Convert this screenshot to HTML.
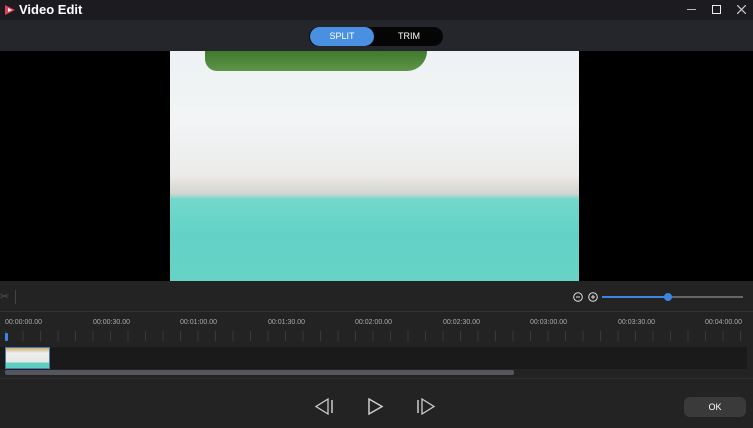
<!DOCTYPE html>
<html><head><style>
body{margin:0;width:753px;height:428px;overflow:hidden;background:#232323;font-family:"Liberation Sans",sans-serif;position:relative}
div{position:absolute;box-sizing:border-box}
.t{font-size:7px;color:#aaa;top:319px}
</style></head><body>
<div style="left:0;top:0;width:753px;height:20px;background:#1c1c20"></div>
<svg style="position:absolute;left:4px;top:4px" width="12" height="12"><path d="M1 1 L11 6 L1 11Z" fill="#e0405a"/><path d="M4 4 L8 6 L4 8Z" fill="#fff"/></svg>
<div style="left:19px;top:2px;color:#fff;font-weight:bold;font-size:13px">Video Edit</div>
<div style="left:687px;top:9px;width:9px;height:1px;background:#bbb"></div>
<div style="left:712px;top:5px;width:9px;height:9px;border:1.5px solid #eee"></div>
<svg style="position:absolute;left:737px;top:5px" width="9" height="9"><path d="M0 0L9 9M9 0L0 9" stroke="#ccc" stroke-width="1.2"/></svg>
<div style="left:0;top:20px;width:753px;height:31px;background:#24262c"></div>
<div style="left:309px;top:27px;width:134px;height:19px;border-radius:10px;background:#050505"></div>
<div style="left:310px;top:27px;width:64px;height:19px;border-radius:10px;background:#4a90e2;color:#fff;font-size:9px;text-align:center;line-height:19px">SPLIT</div>
<div style="left:375px;top:27px;width:68px;height:19px;color:#fff;font-size:9px;text-align:center;line-height:19px">TRIM</div>
<div style="left:0;top:51px;width:753px;height:230px;background:#000"></div>
<div style="left:170px;top:51px;width:409px;height:230px;background:linear-gradient(#eef2f4 0%,#f2f4f5 30%,#ebebea 54%,#e4e2dc 57%,#d2d6d2 62%,#72d8cc 64.5%,#63d2c6 80%,#66d3c6 100%)"></div>
<div style="left:205px;top:51px;width:222px;height:20px;background:linear-gradient(#3f7a2e,#5e9448);border-radius:0 0 50px 30px"></div>
<div style="left:0;top:281px;width:753px;height:31px;background:#232323;border-bottom:1px solid #333"></div>
<div style="left:0;top:290px;width:16px;height:14px;border-right:1px solid #444;color:#555;font-size:11px">✂</div>
<svg style="position:absolute;left:573px;top:291px" width="30" height="12"><circle cx="5" cy="6" r="4.3" fill="none" stroke="#ddd"/><path d="M3 6H7" stroke="#ddd"/><circle cx="20" cy="6" r="4.3" fill="none" stroke="#ddd"/><path d="M18 6H22M20 4V8" stroke="#ddd"/></svg>
<div style="left:602px;top:296px;width:66px;height:2px;background:#3a86e0"></div>
<div style="left:668px;top:296px;width:75px;height:2px;background:#666"></div>
<div style="left:664px;top:293px;width:8px;height:8px;border-radius:50%;background:#3a86e0"></div>
<div class="t" style="left:5px">00:00:00.00</div>
<div class="t" style="left:93px">00:00:30.00</div>
<div class="t" style="left:180px">00:01:00.00</div>
<div class="t" style="left:268px">00:01:30.00</div>
<div class="t" style="left:355px">00:02:00.00</div>
<div class="t" style="left:443px">00:02:30.00</div>
<div class="t" style="left:530px">00:03:00.00</div>
<div class="t" style="left:618px">00:03:30.00</div>
<div class="t" style="left:705px">00:04:00.00</div>
<div style="left:5px;top:331px;width:740px;height:10px;background:repeating-linear-gradient(90deg,#3a3a3a 0 1px,transparent 1px 17.5px)"></div>
<div style="left:5px;top:333px;width:3px;height:8px;background:#3a86e0;border-radius:1px"></div>
<div style="left:0;top:347px;width:747px;height:22px;background:#1a1a1a"></div>
<div style="left:5px;top:347px;width:45px;height:22px;border:1px solid #4a7ab0;background:linear-gradient(#c8b070 0%,#eee 25%,#e6e8e6 70%,#5ccfc0 75%)"></div>
<div style="left:5px;top:370px;width:509px;height:5px;background:#55555e;border-radius:2px"></div>
<div style="left:0;top:378px;width:753px;height:1px;background:#2e2e2e"></div>
<svg style="position:absolute;left:314px;top:397px" width="130" height="20"><path d="M14 2L2 9.5L14 17Z" fill="none" stroke="#ccc" stroke-width="1.3"/><path d="M18 3V16" stroke="#ccc" stroke-width="1.5"/><path d="M55 2L68 9.5L55 17Z" fill="none" stroke="#ccc" stroke-width="1.5"/><path d="M104 3V16" stroke="#ccc" stroke-width="1.5"/><path d="M108 2L120 9.5L108 17Z" fill="none" stroke="#ccc" stroke-width="1.3"/></svg>
<div style="left:684px;top:397px;width:62px;height:20px;border-radius:6px;background:#3a3a3a;color:#fff;font-size:9px;text-align:center;line-height:20px">OK</div>
</body></html>
